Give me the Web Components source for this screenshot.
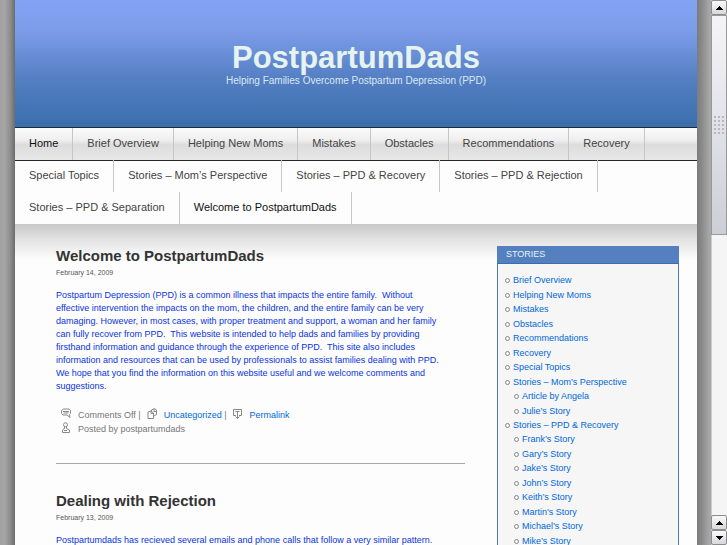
<!DOCTYPE html>
<html lang="en">
<head>
<meta charset="utf-8">
<title>PostpartumDads</title>
<style>
html, body {
  height: 100%;
}

body {
  margin: 0;
  display: flex;
  overflow: hidden;
  font-family: "Liberation Sans", Arial, Helvetica, sans-serif;
  font-size: 9px;
  color: #777;
  --accent: #3b6eac;
  --link: #0068d8;
  --heading: #333;
  --story: #0a34dc;
}
</style>
</head>
<body>

<page-sheet>
  <site-header slot="header">
    PostpartumDads
    <span slot="tagline">Helping Families Overcome Postpartum Depression (PPD)</span>
  </site-header>
  <site-nav slot="nav"></site-nav>

  <blog-post permalink category="Uncategorized" author="postpartumdads">
    <span slot="title">Welcome to PostpartumDads</span>
    <span slot="date">February 14, 2009</span>
    Postpartum Depression (PPD) is a common illness that impacts the entire family.&nbsp; Without effective intervention the impacts on the mom, the children, and the entire family can be very damaging. However, in most cases, with proper treatment and support, a woman and her family can fully recover from PPD.&nbsp; This website is intended to help dads and families by providing firsthand information and guidance through the experience of PPD.&nbsp; This site also includes information and resources that can be used by professionals to assist families dealing with PPD.&nbsp; We hope that you find the information on this website useful and we welcome comments and suggestions.
  </blog-post>

  <blog-post>
    <span slot="title">Dealing with Rejection</span>
    <span slot="date">February 13, 2009</span>
    Postpartumdads has recieved several emails and phone calls that follow a very similar pattern.
  </blog-post>

  <side-widget slot="sidebar">Stories</side-widget>
</page-sheet>
<scroll-rail></scroll-rail>

<script>
class PageSheet extends HTMLElement {
  constructor() {
    super();
    this.attachShadow({ mode: 'open' }).innerHTML = `
      <style>
        :host {
          flex: 1;
          min-width: 0;
          display: grid;
          grid-template-columns: 15px minmax(0, 1fr) 14px;
          background: #a6a6a6;
        }
        .edge-left { background: linear-gradient(to right, #a2a2a2, #a6a6a6 30%, #8c8c8c 70%, #6c6c6c); }
        .edge-right { background: linear-gradient(to right, #7c7c7c, #8a8a8a 35%, #a6a6a6 85%, #a8a8a8); }
        .sheet {
          background: #fdfdfd;
          overflow: hidden;
          display: flex;
          flex-direction: column;
        }
        .columns {
          flex: 1 0 auto;
          display: grid;
          grid-template-columns: minmax(0, 1fr) 182px;
          gap: 32px;
          padding: 22px 18px 0 41px;
          background: linear-gradient(#c8c8c8, #e6e6e6 18px, #fdfdfd 36px) no-repeat;
        }
      </style>
      <div class="edge-left"></div>
      <div class="sheet">
        <slot name="header"></slot>
        <slot name="nav"></slot>
        <div class="columns">
          <main><slot></slot></main>
          <slot name="sidebar"></slot>
        </div>
      </div>
      <div class="edge-right"></div>
    `;
  }
}
customElements.define('page-sheet', PageSheet);

class SiteHeader extends HTMLElement {
  constructor() {
    super();
    this.attachShadow({ mode: 'open' }).innerHTML = `
      <style>
        :host {
          flex: none;
          display: block;
          box-sizing: border-box;
          height: 128px;
          padding-top: 40px;
          text-align: center;
          color: #e6f3ee;
          background: linear-gradient(#84a3f4, #7c9ce9 25%, #547fc3 62%, #3b6eac);
          border-bottom: 1px solid #1c2a3c;
        }
        h1 {
          margin: 0;
          font-size: 31px;
          line-height: 35px;
        }
        p {
          margin: 0;
          font-size: 10px;
          line-height: 12px;
          color: #dbe8f2;
        }
      </style>
      <h1><slot></slot></h1>
      <p><slot name="tagline"></slot></p>
    `;
  }
}
customElements.define('site-header', SiteHeader);

const NAV_ITEMS = [
  'Home', 'Brief Overview', 'Helping New Moms', 'Mistakes', 'Obstacles',
  'Recommendations', 'Recovery', 'Special Topics', 'Stories – Mom’s Perspective',
  'Stories – PPD & Recovery', 'Stories – PPD & Rejection',
  'Stories – PPD & Separation', 'Welcome to PostpartumDads'
];
const NAV_ACTIVE = ['Home', 'Welcome to PostpartumDads'];

class SiteNav extends HTMLElement {
  constructor() {
    super();
    const items = NAV_ITEMS.map(name => {
      const cls = NAV_ACTIVE.includes(name) ? ' class="active"' : '';
      return `<li><a href="#"${cls}>${name.replace('&', '&amp;')}</a></li>`;
    }).join('');

    this.attachShadow({ mode: 'open' }).innerHTML = `
      <style>
        :host {
          flex: none;
          display: block;
          font-size: 11px;
          /* only the first row is shaded, wrapped rows sit on white */
          background:
            linear-gradient(#fbfbfb, #efefef 12px, #dcdcdc 17px, #e8e8e8 32px) 0 0 / 100% 32px no-repeat,
            linear-gradient(#26282c, #26282c) 0 32px / 100% 1px no-repeat,
            #fdfdfd;
        }
        ul {
          display: flex;
          flex-wrap: wrap;
          margin: 0;
          padding: 0;
          list-style: none;
        }
        a {
          display: block;
          padding: 0 14px 2px;
          line-height: 30px;
          color: #444;
          text-decoration: none;
          border-right: 1px solid #c6c6c6;
        }
        a.active { color: #111; }
        a:hover { color: #000; }
      </style>
      <nav><ul>${items}</ul></nav>
    `;
  }
}
customElements.define('site-nav', SiteNav);

const ICONS = {
  comment: '<path d="M3.500 1h5.500l1.500 1.500v3L9.500 6.500l.5 3L7 7H3L1.500 5.500V2.500z"/><path d="M3 3.500h6M3.500 5h5"/>',
  category: '<path d="M5.500 3V2l3-1.500 2 1.500v4.500L8 8"/><path d="M8 1v2.500h2.500"/><path d="M2 4l3-1 2.500 2v5.500H2zM5 3v2.500h2.500"/>',
  permalink: '<path d="M4 7.500H1.500v-6h8v6H7M3.500 3.500h4M5.500 3.500v7M3.500 8.500l2 2 2-2"/>',
  author: '<circle cx="5.500" cy="2.800" r="2"/><path d="M4.500 5v1.500L2.500 8v2.500h7V8L6.500 6.500V5M4 8.500h3"/>'
};

class MetaIcon extends HTMLElement {
  constructor() {
    super();
    this.attachShadow({ mode: 'open' });
  }

  connectedCallback() {
    this.shadowRoot.innerHTML = `
      <style>
        :host { display: inline-flex; }
        svg { width: 12px; height: 12px; fill: none; stroke: #888; stroke-width: 1; }
      </style>
      <svg viewBox="0 0 12 12" aria-hidden="true">${ICONS[this.getAttribute('name')]}</svg>
    `;
  }
}
customElements.define('meta-icon', MetaIcon);

class BlogPost extends HTMLElement {
  constructor() {
    super();
    this.attachShadow({ mode: 'open' });
  }

  connectedCallback() {
    this.shadowRoot.innerHTML = `
      <style>
        :host { display: block; }
        h2 {
          margin: 0;
          font-size: 15px;
          line-height: 20px;
          color: var(--heading);
        }
        .date {
          font-size: 7px;
          line-height: 14px;
          color: #555;
        }
        .body {
          margin: 9px 0 0;
          padding-right: 20px;
          line-height: 13px;
          color: var(--story);
        }
        footer {
          margin: 15px 0 27px;
          padding-left: 4px;
          line-height: 14px;
        }
        .row {
          display: flex;
          gap: 5px;
        }
        .item {
          display: flex;
          gap: 6px;
        }
        a {
          color: var(--link);
          text-decoration: none;
        }
        a:hover { text-decoration: underline; }
        hr {
          margin: 0 0 27px;
          border: 0;
          border-top: 1px solid #aaa;
        }
      </style>
      <article>
        <h2><slot name="title"></slot></h2>
        <div class="date"><slot name="date"></slot></div>
        <p class="body"><slot></slot></p>
        ${this.hasAttribute('permalink') ? this.footer() : ''}
      </article>
    `;
  }

  footer() {
    return `
      <footer>
        <div class="row">
          <span class="item"><meta-icon name="comment"></meta-icon><span>Comments Off |</span></span>
          <span class="item"><meta-icon name="category"></meta-icon><span><a href="#">${this.getAttribute('category')}</a> |</span></span>
          <span class="item"><meta-icon name="permalink"></meta-icon><a href="#">Permalink</a></span>
        </div>
        <div class="row">
          <span class="item"><meta-icon name="author"></meta-icon><span>Posted by ${this.getAttribute('author')}</span></span>
        </div>
      </footer>
      <hr>
    `;
  }
}
customElements.define('blog-post', BlogPost);

const STORIES = [
  { name: 'Brief Overview' },
  { name: 'Helping New Moms' },
  { name: 'Mistakes' },
  { name: 'Obstacles' },
  { name: 'Recommendations' },
  { name: 'Recovery' },
  { name: 'Special Topics' },
  { name: 'Stories – Mom’s Perspective', children: ['Article by Angela', 'Julie’s Story'] },
  {
    name: 'Stories – PPD &amp; Recovery',
    children: [
      'Frank’s Story', 'Gary’s Story', 'Jake’s Story', 'John’s Story',
      'Keith’s Story', 'Martin’s Story', 'Michael’s Story', 'Mike’s Story'
    ]
  }
];

class SideWidget extends HTMLElement {
  constructor() {
    super();
    this.attachShadow({ mode: 'open' }).innerHTML = `
      <style>
        :host {
          display: flex;
          flex-direction: column;
        }
        h3 {
          margin: 0;
          padding-left: 9px;
          font-size: 9px;
          font-weight: normal;
          line-height: 17px;
          text-transform: uppercase;
          color: #e6f3ee;
          background: #5580c0;
          border-bottom: 1px solid var(--accent);
        }
        .box {
          flex: 1;
          padding: 9px 7px 27px;
          background: #f6f6f6;
          border: 1px solid #4a78b8;
          border-top: 0;
        }
        ul {
          margin: 0;
          padding: 0;
          list-style: none;
        }
        ul ul { padding-left: 9px; }
        li { line-height: 14px; }
        li:nth-child(odd) { padding-bottom: 1px; }
        .line {
          display: flex;
          align-items: center;
          gap: 3px;
        }
        .line::before {
          content: "";
          box-sizing: border-box;
          width: 5px;
          height: 5px;
          border: 1px solid #888;
          border-radius: 50%;
        }
        a {
          color: var(--link);
          text-decoration: none;
        }
        a:hover { text-decoration: underline; }
      </style>
      <h3><slot></slot></h3>
      <div class="box">${this.list(STORIES)}</div>
    `;
  }

  list(items) {
    const rows = items.map(item => {
      const name = item.name || item;
      const nested = item.children ? this.list(item.children) : '';
      return `<li><div class="line"><a href="#">${name}</a></div>${nested}</li>`;
    });
    return `<ul>${rows.join('')}</ul>`;
  }
}
customElements.define('side-widget', SideWidget);

class ScrollRail extends HTMLElement {
  constructor() {
    super();
    const up = '<svg viewBox="0 0 7 4"><path d="M3 0h1v1h1v1h1v1h1v1H0V3h1V2h1V1h1z"/></svg>';
    const down = '<svg viewBox="0 0 7 4"><path d="M0 0h7v1H6v1H5v1H4v1H3V3H2V2H1V1H0z"/></svg>';
    this.attachShadow({ mode: 'open' }).innerHTML = `
      <style>
        :host {
          width: 16px;
          display: flex;
          flex-direction: column;
          background: #f5f5f5;
          box-shadow: inset 1px 0 #ccc;
        }
        button {
          flex: none;
          display: grid;
          place-items: center;
          height: 15px;
          padding: 0;
          background: linear-gradient(#fafafa, #d8d8dc);
          border: 1px solid #8c8c8c;
          border-radius: 2px;
        }
        svg { width: 7px; height: 4px; fill: #000; }
        .track {
          flex: 1;
          display: flex;
          flex-direction: column;
        }
        .thumb {
          flex: 0 0 44%;
          box-sizing: border-box;
          display: grid;
          place-items: center;
          background: linear-gradient(#f4f4f8, #e2e3e9 50%, #ccced6);
          border: 1px solid #999;
        }
        .grip {
          width: 12px;
          height: 20px;
          background: radial-gradient(circle, #b8b8bc 1px, transparent 1px) 0 0 / 4px 4px;
        }
      </style>
      <button aria-label="Scroll up">${up}</button>
      <div class="track"><div class="thumb"><div class="grip"></div></div></div>
      <button aria-label="Page up">${up}</button>
      <button aria-label="Scroll down">${down}</button>
    `;
  }
}
customElements.define('scroll-rail', ScrollRail);
</script>
</body>
</html>
